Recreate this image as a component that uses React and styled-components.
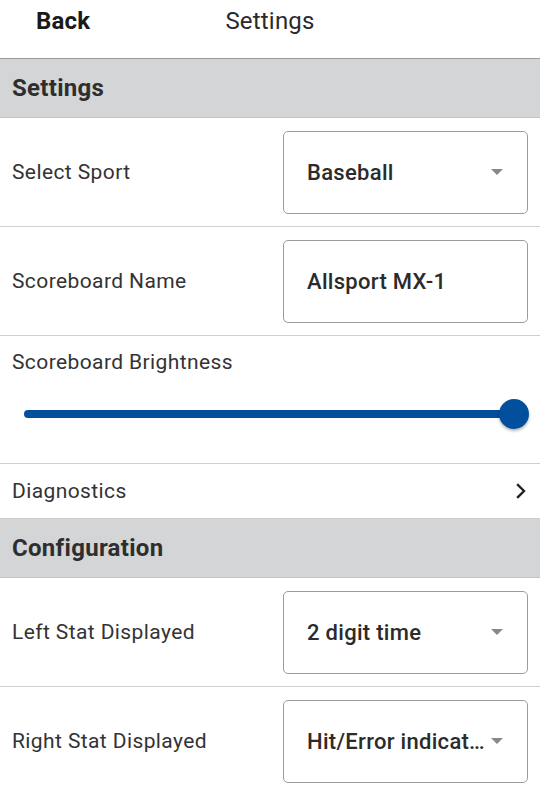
import React from "react";
import styled, { createGlobalStyle } from "styled-components";

const Global = createGlobalStyle`
  html, body { margin: 0; padding: 0; background: #fff; }
  body { font-family: Roboto, "Noto Sans", sans-serif; color: #333; }
  * { box-sizing: border-box; }
`;

const Page = styled.div`
  width: 540px;
  display: flex;
  flex-direction: column;
`;

const Header = styled.div`
  height: 59px;
  display: grid;
  grid-template-columns: 1fr auto 1fr;
  align-items: start;
  padding-top: 7px;
  border-bottom: 1px solid #9a9a9a;
  font-size: 24px;
  line-height: 28px;
  letter-spacing: 0.2px;
`;

const BackButton = styled.div`
  padding-left: 36px;
  font-weight: 700;
  color: #1a1a1a;
`;

const Title = styled.div`
  color: #2a2a2a;
`;

const SectionHeader = styled.div`
  height: 59px;
  background: #d4d5d7;
  border-bottom: 1px solid #c4c4c4;
  display: flex;
  align-items: center;
  padding: 0 12px;
  font-size: 24px;
  letter-spacing: 0.3px;
  font-weight: 700;
  color: #2e2e2e;
`;

const Row = styled.div`
  display: flex;
  align-items: center;
  justify-content: space-between;
  height: ${(p) => p.h || 109}px;
  padding: 0 12px;
  border-bottom: 1px solid #cfcfcf;
`;

const Label = styled.div`
  font-size: 21px;
  line-height: 25px;
  letter-spacing: 0.4px;
  color: #333;
`;

const Field = styled.div`
  width: 245px;
  height: 83px;
  border: 1px solid #9c9c9c;
  border-radius: 5px;
  display: flex;
  align-items: center;
  padding: 0 24px 0 23px;
  font-size: 22px;
  letter-spacing: 0.3px;
  font-weight: 500;
  color: #2b2b2b;
  gap: 4px;
`;

const FieldText = styled.span`
  flex: 1;
  min-width: 0;
  white-space: nowrap;
  overflow: hidden;
  text-overflow: ellipsis;
`;

const Caret = styled.span`
  width: 0;
  height: 0;
  border-left: 6px solid transparent;
  border-right: 6px solid transparent;
  border-top: 6px solid #888;
  flex-shrink: 0;
`;

const SliderRow = styled.div`
  height: 128px;
  border-bottom: 1px solid #cfcfcf;
  padding: 14px 12px 0;
  display: flex;
  flex-direction: column;
`;

const SliderTrack = styled.div`
  position: relative;
  margin: 35px 14px 0 12px;
  height: 8px;
  border-radius: 4px;
  background: #02509d;
`;

const Thumb = styled.div`
  position: absolute;
  right: -15px;
  top: 50%;
  width: 30px;
  height: 30px;
  margin-top: -15px;
  border-radius: 50%;
  background: #02509d;
  box-shadow: 0 2px 3px rgba(0, 0, 0, 0.3);
`;

const Chevron = () => (
  <svg width="14" height="16" viewBox="0 0 14 16">
    <path d="M4 2 L10 8 L4 14" fill="none" stroke="#222" strokeWidth="2.4" strokeLinecap="square" />
  </svg>
);

export default function App() {
  return (
    <Page>
      <Global />
      <Header>
        <BackButton>Back</BackButton>
        <Title>Settings</Title>
        <div />
      </Header>
      <SectionHeader>Settings</SectionHeader>
      <Row>
        <Label>Select Sport</Label>
        <Field>
          <FieldText>Baseball</FieldText>
          <Caret />
        </Field>
      </Row>
      <Row>
        <Label>Scoreboard Name</Label>
        <Field>
          <FieldText>Allsport MX-1</FieldText>
        </Field>
      </Row>
      <SliderRow>
        <Label>Scoreboard Brightness</Label>
        <SliderTrack>
          <Thumb />
        </SliderTrack>
      </SliderRow>
      <Row h={55}>
        <Label>Diagnostics</Label>
        <Chevron />
      </Row>
      <SectionHeader>Configuration</SectionHeader>
      <Row>
        <Label>Left Stat Displayed</Label>
        <Field>
          <FieldText>2 digit time</FieldText>
          <Caret />
        </Field>
      </Row>
      <Row>
        <Label>Right Stat Displayed</Label>
        <Field>
          <FieldText>Hit/Error indicator</FieldText>
          <Caret />
        </Field>
      </Row>
    </Page>
  );
}
